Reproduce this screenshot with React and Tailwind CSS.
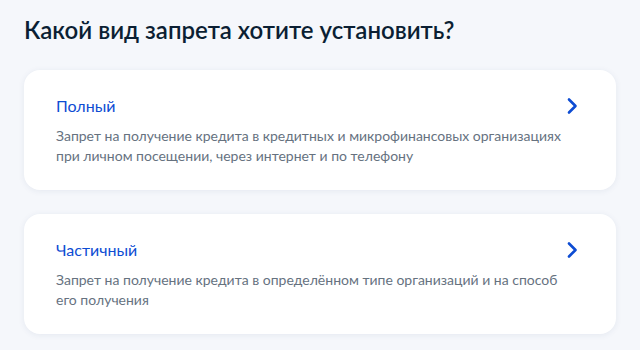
import React from "react";

const options = [
  {
    title: "Полный",
    desc: "Запрет на получение кредита в кредитных и микрофинансовых организациях при личном посещении, через интернет и по телефону",
  },
  {
    title: "Частичный",
    desc: "Запрет на получение кредита в определённом типе организаций и на способ его получения",
  },
];

function Chevron() {
  return (
    <svg width="24" height="24" viewBox="0 0 24 24" fill="none" className="shrink-0">
      <path d="M9 5.5l6.5 6.5L9 18.5" stroke="#0d4cd3" strokeWidth="2.6" strokeLinecap="round" strokeLinejoin="round" />
    </svg>
  );
}

export default function App() {
  return (
    <div className="min-h-[350px] w-[640px] bg-[#f5f7fb] px-6 pt-[14px] pb-4 font-['Lato',sans-serif]">
      <h1 className="text-[24px] leading-8 font-semibold text-[#0b1f33]">
        Какой вид запрета хотите установить?
      </h1>
      <div className="mt-6 flex flex-col gap-6">
        {options.map((o) => (
          <div
            key={o.title}
            className="rounded-2xl bg-white px-8 py-6 shadow-[0_1px_6px_rgba(40,60,120,0.08)]"
          >
            <div className="flex items-center justify-between">
              <span className="text-[16px] leading-6 text-[#0d4cd3]">{o.title}</span>
              <Chevron />
            </div>
            <p className="mt-2 pr-3 text-[14px] leading-5 text-[#66727f]">{o.desc}</p>
          </div>
        ))}
      </div>
    </div>
  );
}
